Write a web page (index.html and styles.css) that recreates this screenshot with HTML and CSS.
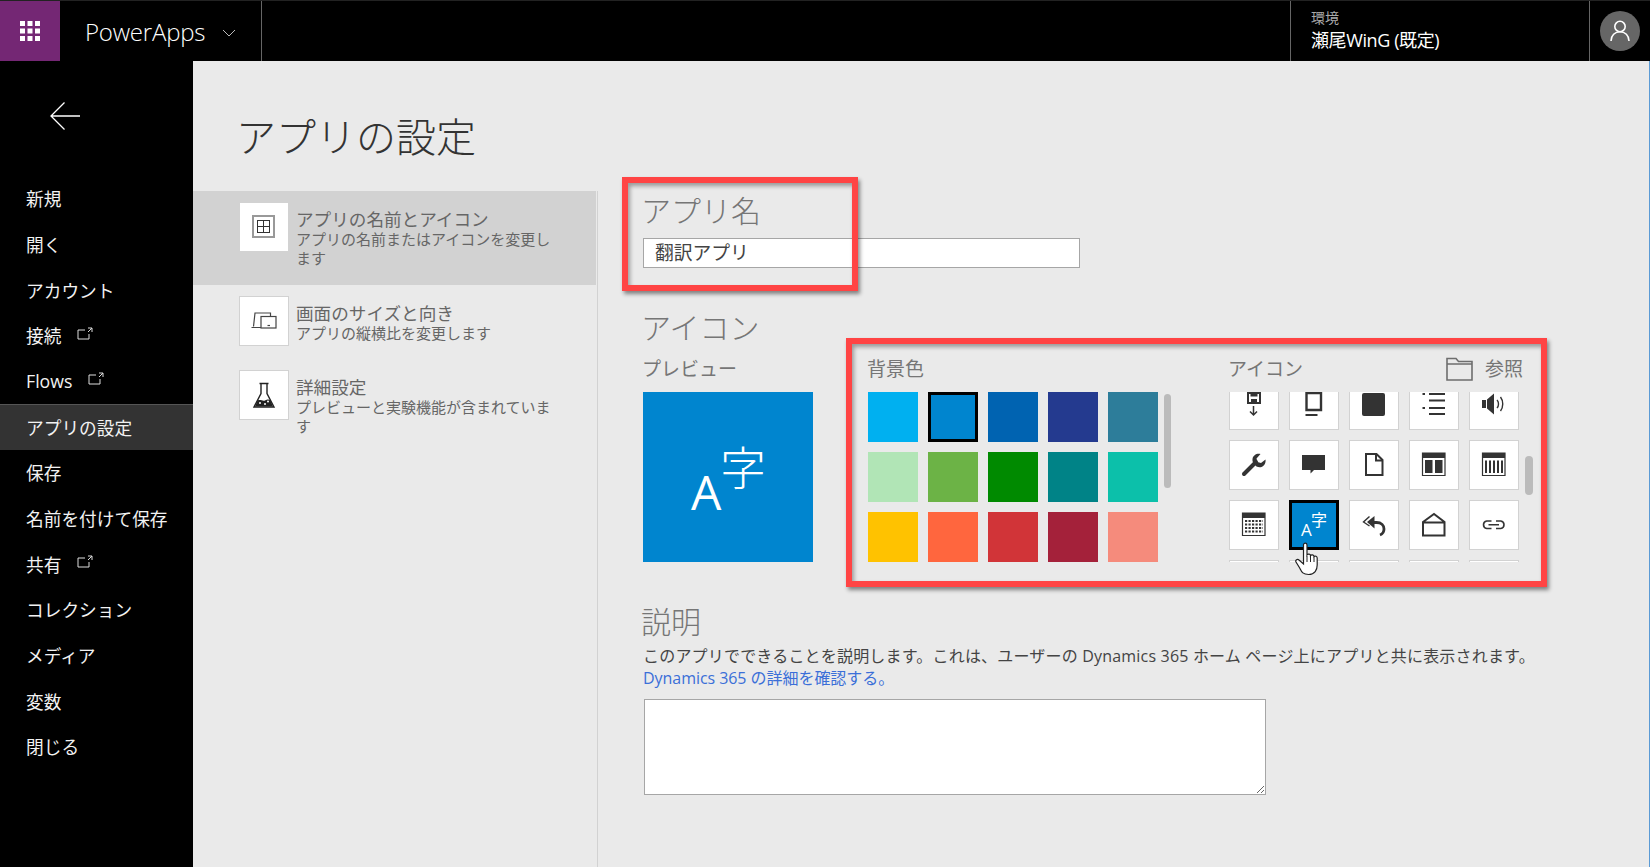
FILE: index.html
```html
<!DOCTYPE html>
<html lang="ja">
<head>
<meta charset="utf-8">
<title>アプリの設定</title>
<link rel="stylesheet" href="styles.css">
</head>
<body>
<div class="app">
  <header class="topbar">
    <div class="waffle">
      <svg width="20" height="20" viewBox="0 0 20 20" fill="#fff"><rect x="0" y="0" width="5" height="5"/><rect x="7.5" y="0" width="5" height="5"/><rect x="15" y="0" width="5" height="5"/><rect x="0" y="7.5" width="5" height="5"/><rect x="7.5" y="7.5" width="5" height="5"/><rect x="15" y="7.5" width="5" height="5"/><rect x="0" y="15" width="5" height="5"/><rect x="7.5" y="15" width="5" height="5"/><rect x="15" y="15" width="5" height="5"/></svg>
    </div>
    <div class="brand">
      <span class="brand-name">PowerApps</span>
      <svg class="chev" width="14" height="8" viewBox="0 0 14 8" fill="none" stroke="#bbb" stroke-width="1"><path d="M1 1l6 6 6-6"/></svg>
    </div>
    <div class="env">
      <div class="env-label">環境</div>
      <div class="env-name">瀬尾WinG (既定)</div>
    </div>
    <div class="user">
      <div class="avatar">
        <svg width="20" height="22" viewBox="0 0 20 22" fill="none" stroke="#fff" stroke-width="1.6"><circle cx="10" cy="6.5" r="5.2"/><path d="M1 21c0-5.5 4-9.3 9-9.3s9 3.800 9 9.300"/></svg>
      </div>
    </div>
  </header>
  <div class="body">
    <nav class="sidebar">
      <div class="back">
        <svg width="32" height="30" viewBox="0 0 32 30" fill="none" stroke="#fff" stroke-width="1.300"><path d="M31 15H2M15.500 1.500L2 15l13.500 13.500"/></svg>
      </div>
      <a class="nav-item">新規</a>
      <a class="nav-item">開く</a>
      <a class="nav-item">アカウント</a>
      <a class="nav-item">接続<svg class="ext" width="16" height="13" viewBox="0 0 16 13" fill="none" stroke="#ddd" stroke-width="1"><path d="M8 3H1v9h11V7M11 1h4v4M15 1l-4 4"/></svg></a>
      <a class="nav-item">Flows<svg class="ext" width="16" height="13" viewBox="0 0 16 13" fill="none" stroke="#ddd" stroke-width="1"><path d="M8 3H1v9h11V7M11 1h4v4M15 1l-4 4"/></svg></a>
      <a class="nav-item active">アプリの設定</a>
      <a class="nav-item">保存</a>
      <a class="nav-item">名前を付けて保存</a>
      <a class="nav-item">共有<svg class="ext" width="16" height="13" viewBox="0 0 16 13" fill="none" stroke="#ddd" stroke-width="1"><path d="M8 3H1v9h11V7M11 1h4v4M15 1l-4 4"/></svg></a>
      <a class="nav-item">コレクション</a>
      <a class="nav-item">メディア</a>
      <a class="nav-item">変数</a>
      <a class="nav-item">閉じる</a>
    </nav>
    <main class="main">
      <h1 class="page-title">アプリの設定</h1>
      <div class="columns">
        <aside class="tabs">
          <div class="tab selected">
            <div class="tab-icon">
              <svg width="48" height="48" viewBox="0 0 48 48" fill="none" stroke="#333"><rect x="12.500" y="12.500" width="22" height="22" stroke-dasharray="1 1"/><rect x="13.500" y="13.500" width="20" height="20" stroke-dasharray="1 1" stroke-dashoffset="1"/><rect x="17.500" y="17.500" width="12" height="12"/><path d="M23.500 17.500v12M17.500 23.500h12"/></svg>
            </div>
            <div class="tab-text">
              <div class="tab-title">アプリの名前とアイコン</div>
              <div class="tab-sub">アプリの名前またはアイコンを変更します</div>
            </div>
          </div>
          <div class="tab">
            <div class="tab-icon">
              <svg width="48" height="48" viewBox="0 0 48 48" fill="none" stroke="#444" stroke-width="1.200"><path d="M13.500 29.500l1.500-13.500h15.500v3.500M11.500 30.500H21"/><rect x="21" y="19.500" width="15" height="11.500"/><path d="M27.500 28.500h2.500"/></svg>
            </div>
            <div class="tab-text">
              <div class="tab-title">画面のサイズと向き</div>
              <div class="tab-sub">アプリの縦横比を変更します</div>
            </div>
          </div>
          <div class="tab">
            <div class="tab-icon">
              <svg width="48" height="48" viewBox="0 0 48 48" fill="none" stroke="#222" stroke-width="1.400"><path d="M19.500 12.500h9M21 12.500v10l-7 13.500h20L27 22.500v-10"/><path d="M17.500 29.500c3-1.500 5 1 7.500 0s3.500-1.500 5.500 0l2.500 6h-18z" fill="#222" stroke="none"/><g fill="#fff" stroke="none"><circle cx="20" cy="32" r="1"/><circle cx="25" cy="33" r="1"/><circle cx="28" cy="30.500" r="1"/></g></svg>
            </div>
            <div class="tab-text">
              <div class="tab-title">詳細設定</div>
              <div class="tab-sub">プレビューと実験機能が含まれています</div>
            </div>
          </div>
        </aside>
        <section class="content">
          <h2 class="section-title">アプリ名</h2>
          <input class="name-input" type="text" value="翻訳アプリ">
          <h2 class="section-title icon-title">アイコン</h2>
          <div class="picker">
            <div class="preview-col">
              <div class="label">プレビュー</div>
              <div class="preview"><span class="big-a">A</span><span class="big-ji">字</span></div>
            </div>
            <div class="color-col">
              <div class="label">背景色</div>
              <div class="color-wrap">
                <div class="swatches">
                  <div class="swatch c1"></div><div class="swatch c2 current"></div><div class="swatch c3"></div><div class="swatch c4"></div><div class="swatch c5"></div>
                  <div class="swatch c6"></div><div class="swatch c7"></div><div class="swatch c8"></div><div class="swatch c9"></div><div class="swatch c10"></div>
                  <div class="swatch c11"></div><div class="swatch c12"></div><div class="swatch c13"></div><div class="swatch c14"></div><div class="swatch c15"></div>
                </div>
                <div class="scroll scroll-color"></div>
              </div>
            </div>
            <div class="icon-col">
              <div class="icon-head">
                <div class="label">アイコン</div>
                <div class="browse">
                  <svg width="27" height="24" viewBox="0 0 27 24" fill="none" stroke="#6e6e6e" stroke-width="1.600"><path d="M1 23V1.500h9l2.500 3H26V23zM1 7h25"/></svg>
                  <span>参照</span>
                </div>
              </div>
              <div class="icon-view">
                <div class="icons">
                  <div class="ico"><svg viewBox="0 0 50 50"><path d="M19 13h12v10H19z" fill="none" stroke="#333" stroke-width="2"/><path d="M21.500 13h7v3.500h-7zM22 19h6v4h-6z" fill="#333"/><path d="M24.500 26v9M21 31.500l3.500 3.500 3.500-3.500" fill="none" stroke="#333" stroke-width="1.500"/></svg></div>
                  <div class="ico"><svg viewBox="0 0 50 50"><path d="M17.500 13h14.500v17H17.500z" fill="none" stroke="#333" stroke-width="2.400"/><path d="M16.500 35h12" stroke="#333" stroke-width="2"/></svg></div>
                  <div class="ico"><svg viewBox="0 0 50 50"><rect x="13" y="13" width="23" height="23" rx="2" fill="#333"/></svg></div>
                  <div class="ico"><svg viewBox="0 0 50 50" stroke="#333" stroke-width="2"><path d="M20 14h16M20 20.500h16M20 28h16M20 34h16M13.500 14h2.500M13.500 28h2.500"/></svg></div>
                  <div class="ico"><svg viewBox="0 0 50 50"><path d="M13 20h4v8h-4zM18 19.500L25 13.500v21l-7-6z" fill="#333"/><path d="M28 20c2 2 2 6 0 8M31.500 17c3 4 3 10 0 14" fill="none" stroke="#333" stroke-width="1.400"/></svg></div>

                  <div class="ico"><svg viewBox="0 0 50 50"><path d="M15 34l12-12" stroke="#333" stroke-width="4" stroke-linecap="round"/><path d="M36.500 19.500l-4.500 3.500-3.500-1-1-3.500 4-4.500c-3.500-1-7.500 1-8 5-.3 2 .5 3.500 1.500 5l2.500 2.500c1.500.8 3.500 1.200 5 .5 3-1 4.500-4.500 4-7.500z" fill="#333"/></svg></div>
                  <div class="ico"><svg viewBox="0 0 50 50"><path d="M13 15h23v15H25l-3.500 3.500V30H13z" fill="#333"/></svg></div>
                  <div class="ico"><svg viewBox="0 0 50 50" fill="none" stroke="#333" stroke-width="2"><path d="M17 14h10.500l6 6v15H17z"/><path d="M27 14v6.500h6.500"/></svg></div>
                  <div class="ico"><svg viewBox="0 0 50 50"><path d="M13.500 13h22.500v22.500H13.500z" fill="#fff" stroke="#333" stroke-width="1.200"/><path d="M13.500 13h22.500v5H13.500zM16 20h7.500v13H16zM26 20h7.500v13H26z" fill="#333"/></svg></div>
                  <div class="ico"><svg viewBox="0 0 50 50"><path d="M13.500 13h22.500v22.500H13.500z" fill="#fff" stroke="#333" stroke-width="1.200"/><path d="M13.500 13h22.500v5H13.500z" fill="#333"/><path d="M17 20.500v12.500M21 20.500v12.500M25 20.500v12.500M29 20.500v12.500M33 20.500v12.500" stroke="#333" stroke-width="2"/></svg></div>

                  <div class="ico"><svg viewBox="0 0 50 50"><path d="M13.500 13h22.500v22.500H13.500z" fill="#fff" stroke="#333" stroke-width="1.200"/><path d="M13.500 13h22.500v5H13.500z" fill="#333"/><path d="M16 21h18M16 24.500h18M16 28h18M16 31.500h18" stroke="#333" stroke-width="2.200" stroke-dasharray="2.200 1.300"/></svg></div>
                  <div class="ico ico-on"><span class="mini-a">A</span><span class="mini-ji">字</span></div>
                  <div class="ico"><svg viewBox="0 0 50 50" fill="none" stroke="#333"><path d="M20.500 16.500l-6 5.500 6 4" stroke-width="1.400"/><path d="M25.500 16v12.500l-7.500-6.500z" fill="#333" stroke="none"/><path d="M24 22.500h3.500c5 0 7.500 3 7.500 6.500 0 3-1.500 5-4 6" stroke-width="2.800"/></svg></div>
                  <div class="ico"><svg viewBox="0 0 50 50" fill="none" stroke="#333" stroke-width="2"><path d="M14 22l11-8 10.500 8v13.500H14zM14 22.500h21.500"/></svg></div>
                  <div class="ico"><svg viewBox="0 0 50 50" fill="none" stroke="#333" stroke-width="1.600"><path d="M22.500 21h-4.800a3.800 3.800 0 0 0 0 7.500h4.800M27 21h4.800a3.800 3.800 0 0 1 0 7.500H27M19.500 24.800h10.500"/></svg></div>

                  <div class="ico"></div><div class="ico"></div><div class="ico"></div><div class="ico"></div><div class="ico"></div>
                </div>
              </div>
              <svg class="hand" width="26" height="34" viewBox="0 0 26 34"><path d="M8.500 3c0-2.500 3.500-2.500 3.500 0v10c1-1.500 3.500-1 3.500.5 1-1.200 3.300-.8 3.500 1 1.200-1 3.200-.3 3.200 1.500v7c0 5-2.500 9.500-8.500 9.500s-7-2.500-9-6.500L1 20c-1-2 1.500-3.500 3-2l4.500 4z" fill="#fff" stroke="#222" stroke-width="1.200"/><path d="M12 14v6M15.500 14v6M19 15v5" stroke="#222" stroke-width="1" fill="none"/></svg>
              <div class="scroll scroll-icons"></div>
            </div>
          </div>
          <h2 class="section-title desc-title">説明</h2>
          <p class="desc">このアプリでできることを説明します。これは、ユーザーの Dynamics 365 ホーム ページ上にアプリと共に表示されます。<br><a class="link">Dynamics 365 の詳細を確認する。</a></p>
          <textarea class="desc-input"></textarea>
        </section>
      </div>
    </main>
  </div>
  <div class="mark mark-name"></div>
  <div class="mark mark-icons"></div>
</div>
</body>
</html>
```

FILE: styles.css
```css
* { box-sizing: border-box; }
html, body { margin: 0; padding: 0; }
body {
  font-family: "Open Sans", "Noto Sans CJK JP", sans-serif;
  background: #eaeaea;
  overflow: hidden;
}
.app { position: relative; width: 1650px; height: 867px; overflow: hidden; display: flex; flex-direction: column; }
.topbar { height: 61px; flex: none; background: #000; border-top: 1px solid #222; display: flex; align-items: stretch; color: #fff; }
.waffle { width: 60px; background: #742774; display: flex; align-items: center; justify-content: center; }
.brand { width: 202px; border-right: 1px solid #666; display: flex; align-items: center; padding-left: 25px; }
.brand-name { font-size: 24px; font-weight: 300; letter-spacing: -.2px; }
.chev { margin-left: 17px; margin-top: 3px; }
.env { margin-left: auto; width: 300px; border-left: 1px solid #666; border-right: 1px solid #666; padding: 7px 0 0 20px; }
.env-label { font-size: 14px; line-height: 20px; color: #aaa; }
.env-name { font-size: 18px; line-height: 24px; letter-spacing: -.4px; }
.user { width: 60px; display: flex; align-items: center; padding-left: 10px; }
.avatar { width: 40px; height: 40px; border-radius: 50%; background: #666; display: flex; align-items: center; justify-content: center; }
.body { flex: 1; display: flex; min-height: 0; }
.sidebar { width: 193px; flex: none; background: #000; color: #fff; }
.back { height: 115px; padding: 40px 0 0 49px; }
.nav-item { display: flex; align-items: center; height: 45.67px; padding: 0 0 1px 26px; font-size: 17.7px; color: #f2f2f2; }
.nav-item.active { background: #333; border-top: 1px solid #555; }
.ext { margin-left: 16px; margin-top: -4px; }
.main { flex: 1; min-width: 0; display: flex; flex-direction: column; border-right: 1px solid #5b9bd5; }
.page-title { margin: 0; height: 130px; padding: 50px 0 0 43px; font-size: 40px; line-height: 52px; font-weight: 300; color: #333; }
.columns { flex: 1; display: flex; min-height: 0; }
.tabs { width: 405px; flex: none; border-right: 1px solid #d2d2d2; padding-right: 1px; }
.tab { display: flex; gap: 7px; padding: 11px 0 0 46px; height: 74px; color: #666; }
.tab.selected { height: 94px; background: #d2d2d2; }
.tab-icon { width: 50px; height: 50px; flex: none; background: #fff; border: 1px solid #d2d2d2; }
.tab-icon svg { display: block; }
.tab-text { width: 262px; padding-top: 7px; }
.tab-title { font-size: 17.6px; line-height: 21px; }
.tab-sub { font-size: 15px; line-height: 19px; }
.content { flex: 1; padding-left: 45px; min-width: 0; }
.section-title { margin: 0 0 0 -2px; font-size: 30px; line-height: 40px; font-weight: 300; color: #767676; }
.name-input { display: block; margin-top: 7px; width: 437px; height: 30px; padding: 0 11px 3px; border: 1px solid #a6a6a6; background: #fff; font: 18.8px "Open Sans", "Noto Sans CJK JP", sans-serif; color: #444; outline: none; border-radius: 0; }
.icon-title { margin-top: 40px; }
.picker { display: flex; margin-top: 10px; height: 244px; }
.label { font-size: 19px; line-height: 20px; color: #767676; padding-top: 1px; height: 34px; margin-left: -1px; }
.preview-col { width: 225px; flex: none; }
.preview { position: relative; width: 170px; height: 170px; background: #0085cf; color: #fff; }
.big-a { position: absolute; left: 48px; top: 70px; font-size: 48px; line-height: 60px; }
.big-ji { position: absolute; left: 77px; top: 45px; font-size: 46px; line-height: 60px; font-weight: 300; }
.color-col { width: 361px; flex: none; }
.color-wrap { position: relative; }
.swatches { display: grid; grid-template-columns: repeat(5, 50px); grid-auto-rows: 50px; gap: 10px; }
.swatch { background: #888; }
.swatch.current { border: 3px solid #000; }
.c1 { background: #00b0f0; } .c2 { background: #0085cf; } .c3 { background: #0063b1; } .c4 { background: #243a8f; } .c5 { background: #2d7d9a; }
.c6 { background: #b1e5b6; } .c7 { background: #6cb346; } .c8 { background: #008a00; } .c9 { background: #008387; } .c10 { background: #0cc0aa; }
.c11 { background: #ffc200; } .c12 { background: #ff663e; } .c13 { background: #d13438; } .c14 { background: #a4213a; } .c15 { background: #f58b7c; }
.scroll { position: absolute; background: #bbb; border-radius: 4px; width: 7px; }
.scroll-color { left: 296px; top: 2px; height: 94px; }
.icon-col { position: relative; width: 304px; flex: none; }
.icon-head { display: flex; justify-content: space-between; height: 34px; width: 294px; }
.browse { display: flex; gap: 12px; font-size: 19px; line-height: 20px; color: #767676; padding-top: 1px; }
.browse svg { margin-top: -2px; }
.icon-view { position: relative; height: 170px; width: 290px; overflow: hidden; }
.icons { display: grid; grid-template-columns: repeat(5, 50px); grid-auto-rows: 50px; gap: 10px; margin-top: -12px; }
.ico { position: relative; background: #fff; border: 1px solid #d2d2d2; }
.ico svg { position: absolute; left: -1px; top: -1px; width: 50px; height: 50px; }
.ico-on { background: #0085cf; border: 3px solid #000; color: #fff; }
.mini-a { position: absolute; left: 9px; top: 15px; font-size: 17px; line-height: 24px; }
.mini-ji { position: absolute; left: 19px; top: 5px; font-size: 16px; line-height: 24px; }
.hand { position: absolute; left: 66px; top: 184px; }
.scroll-icons { left: 296px; top: 98px; height: 39px; width: 8px; }
.desc { margin: 3px 0 0; font-size: 16px; line-height: 22px; color: #444; white-space: nowrap; letter-spacing: .19px; }
.link { color: #3b6fd8; letter-spacing: -.05px; }
.desc-input { display: block; margin-top: 10px; margin-left: 1px; width: 622px; height: 96px; border: 1px solid #a6a6a6; background: #fff; border-radius: 0; outline: none; }
.mark { position: absolute; border: 6px solid #ff4444; box-shadow: 2px 3px 4px rgba(0,0,0,.45), inset 2px 3px 4px rgba(0,0,0,.35); pointer-events: none; }
.mark-name { left: 622px; top: 177px; width: 236px; height: 114px; }
.mark-icons { left: 846px; top: 338px; width: 701px; height: 249px; }
```
